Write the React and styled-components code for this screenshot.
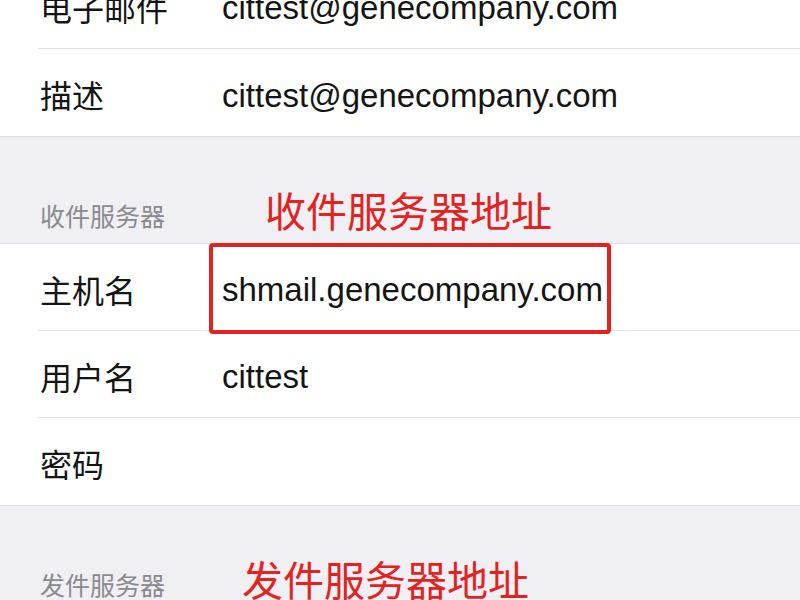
import React from 'react';
import styled, { createGlobalStyle } from 'styled-components';

const GlobalStyle = createGlobalStyle`
  html, body {
    margin: 0;
    padding: 0;
    background: #efeff4;
    overflow: hidden;
  }
  body {
    font-family: "Liberation Sans", "Noto Sans CJK SC", sans-serif;
    -webkit-font-smoothing: antialiased;
  }
`;

const Screen = styled.div`
  width: 800px;
  margin-top: -38px; /* list is scrolled, first row is half off screen */
`;

const Group = styled.div`
  background: #fff;
  border-top: ${(p) => (p.$noTop ? 'none' : '1px solid #dcdce0')};
  border-bottom: 1px solid #dcdce0;
`;

const Row = styled.div`
  position: relative;
  box-sizing: border-box;
  height: 87px;
  margin-left: 38px;
  padding: 3px 0 0 2px;
  display: grid;
  grid-template-columns: 182px 1fr;
  align-items: center;
  border-bottom: ${(p) => (p.$last ? 'none' : '1px solid #e2e2e6')};
`;

const Label = styled.span`
  font-family: "Noto Sans CJK SC", sans-serif;
  font-size: 32px;
  color: #151515;
  line-height: 40px;
`;

const Value = styled.span`
  font-size: 33px;
  color: #151515;
  line-height: 40px;
  padding-top: 3px;
  white-space: nowrap;
`;

const SectionHeader = styled.div`
  position: relative;
  box-sizing: border-box;
  height: 106px;
  padding: 0 0 14px 40px;
  display: flex;
  align-items: flex-end;
`;

const HeaderLabel = styled.span`
  font-family: "Noto Sans CJK SC", sans-serif;
  font-size: 25px;
  line-height: 28px;
  color: #8a8a8f;
`;

const Annotation = styled.span`
  position: absolute;
  top: 48px;
  left: ${(p) => p.$left}px;
  font-family: "Noto Sans CJK SC", sans-serif;
  font-size: 41px;
  line-height: 48px;
  color: #e3231f;
`;

const Highlight = styled.div`
  position: absolute;
  left: 171px;
  top: -1px;
  width: 402px;
  height: 91px;
  box-sizing: border-box;
  border: 4px solid #e3231f;
  border-radius: 4px;
  pointer-events: none;
`;

const Field = ({ label, value, last, highlight }) => (
  <Row $last={last}>
    <Label>{label}</Label>
    <Value>{value}</Value>
    {highlight && <Highlight />}
  </Row>
);

export default function App() {
  return (
    <>
      <GlobalStyle />
      <Screen>
        <Group $noTop>
          <Field label="电子邮件" value="cittest@genecompany.com" />
          <Field label="描述" value="cittest@genecompany.com" last />
        </Group>

        <SectionHeader>
          <HeaderLabel>收件服务器</HeaderLabel>
          <Annotation $left={265}>收件服务器地址</Annotation>
        </SectionHeader>

        <Group>
          <Field label="主机名" value="shmail.genecompany.com" highlight />
          <Field label="用户名" value="cittest" />
          <Field label="密码" value="" last />
        </Group>

        <SectionHeader>
          <HeaderLabel>发件服务器</HeaderLabel>
          <Annotation $left={242}>发件服务器地址</Annotation>
        </SectionHeader>
      </Screen>
    </>
  );
}
